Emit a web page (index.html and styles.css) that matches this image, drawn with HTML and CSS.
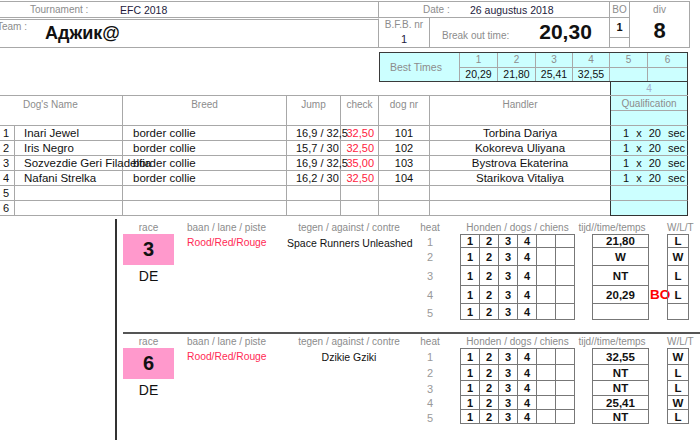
FILE: index.html
```html
<!DOCTYPE html>
<html>
<head>
<meta charset="utf-8">
<link rel="stylesheet" href="styles.css">
</head>
<body>
<div class="sheet">
  <div class="top">
    <div class="c tour"><span class="lbl">Tournament :</span><span class="val">EFC 2018</span></div>
    <div class="c date"><span class="lbl">Date :</span><span class="val">26 augustus 2018</span></div>
    <div class="c bolbl"><span class="lbl">BO</span></div>
    <div class="c divc"><span class="lbl">div</span><span class="big">8</span></div>
    <div class="c team"><span class="lbl">Team :</span><span class="teamname">Аджик@</span></div>
    <div class="c bfb"><span class="lbl">B.F.B. nr</span><span class="num">1</span></div>
    <div class="c bot"><span class="lbl">Break out time:</span><span class="big">20,30</span></div>
    <div class="c boval"><div class="one">1</div></div>
  </div>

  <div class="best">
    <div class="btl">Best Times</div>
    <div class="bh">1</div><div class="bh">2</div><div class="bh">3</div><div class="bh">4</div><div class="bh">5</div><div class="bh e">6</div>
    <div class="bv">20,29</div><div class="bv">21,80</div><div class="bv">25,41</div><div class="bv">32,55</div><div class="bv"></div><div class="bv e"></div>
  </div>
  <div class="q4">4</div>

  <div class="tbl">
    <div class="th name">Dog's Name</div>
    <div class="th">Breed</div>
    <div class="th">Jump</div>
    <div class="th">check</div>
    <div class="th">dog nr</div>
    <div class="th hd">Handler</div>
    <div class="th q"><div class="qh">Qualification</div></div>

    <div class="td n">1</div><div class="td nm">Inari Jewel</div><div class="td br">border collie</div><div class="td jp">16,9 / 32,5</div><div class="td ck">32,50</div><div class="td nr">101</div><div class="td hd">Torbina Dariya</div><div class="td q qv"><span>1</span><span>x</span><span>20</span><span>sec</span></div>
    <div class="td n">2</div><div class="td nm">Iris Negro</div><div class="td br">border collie</div><div class="td jp">15,7 / 30</div><div class="td ck">32,50</div><div class="td nr">102</div><div class="td hd">Kokoreva Uliyana</div><div class="td q qv"><span>1</span><span>x</span><span>20</span><span>sec</span></div>
    <div class="td n">3</div><div class="td nm">Sozvezdie Geri Filadelfia</div><div class="td br">border collie</div><div class="td jp">16,9 / 32,5</div><div class="td ck">35,00</div><div class="td nr">103</div><div class="td hd">Bystrova Ekaterina</div><div class="td q qv"><span>1</span><span>x</span><span>20</span><span>sec</span></div>
    <div class="td n">4</div><div class="td nm">Nafani Strelka</div><div class="td br">border collie</div><div class="td jp">16,2 / 30</div><div class="td ck">32,50</div><div class="td nr">104</div><div class="td hd">Starikova Vitaliya</div><div class="td q qv"><span>1</span><span>x</span><span>20</span><span>sec</span></div>
    <div class="td n">5</div><div class="td nm"></div><div class="td br"></div><div class="td jp"></div><div class="td ck"></div><div class="td nr"></div><div class="td hd"></div><div class="td q"></div>
    <div class="td n">6</div><div class="td nm"></div><div class="td br"></div><div class="td jp"></div><div class="td ck"></div><div class="td nr"></div><div class="td hd"></div><div class="td q qlast"></div>
  </div>

  <div class="lower">
    <div class="blk b1">
      <div class="hl h-race">race</div>
      <div class="hl h-lane">baan / lane / piste</div>
      <div class="hl h-opp">tegen / against / contre</div>
      <div class="hl h-heat">heat</div>
      <div class="hl h-dogs">Honden / dogs / chiens</div>
      <div class="hl h-time">tijd//time/temps</div>
      <div class="hl h-wlt">W/L/T</div>

      <div class="race"><div class="pink">3</div><div class="de">DE</div></div>
      <div class="lane">Rood/Red/Rouge</div>
      <div class="opp">Space Runners Unleashed</div>

      <div class="ht r2">1</div><div class="ht r3">2</div><div class="ht r4">3</div><div class="ht r5">4</div><div class="ht r6">5</div>

      <div class="dg r2"><span>1</span><span>2</span><span>3</span><span>4</span><span></span><span></span></div>
      <div class="dg r3"><span>1</span><span>2</span><span>3</span><span>4</span><span></span><span></span></div>
      <div class="dg r4"><span>1</span><span>2</span><span>3</span><span>4</span><span></span><span></span></div>
      <div class="dg r5"><span>1</span><span>2</span><span>3</span><span>4</span><span></span><span></span></div>
      <div class="dg r6 last"><span>1</span><span>2</span><span>3</span><span>4</span><span></span><span></span></div>

      <div class="tm r2">21,80</div><div class="tm r3">W</div><div class="tm r4">NT</div><div class="tm r5">20,29</div><div class="tm r6 last"></div>
      <div class="bo r5">BO</div>
      <div class="wl r2">L</div><div class="wl r3">W</div><div class="wl r4">L</div><div class="wl r5">L</div><div class="wl r6 last"></div>
    </div>

    <div class="blk b2">
      <div class="hl h-race">race</div>
      <div class="hl h-lane">baan / lane / piste</div>
      <div class="hl h-opp">tegen / against / contre</div>
      <div class="hl h-heat">heat</div>
      <div class="hl h-dogs">Honden / dogs / chiens</div>
      <div class="hl h-time">tijd//time/temps</div>
      <div class="hl h-wlt">W/L/T</div>

      <div class="race"><div class="pink">6</div><div class="de">DE</div></div>
      <div class="lane">Rood/Red/Rouge</div>
      <div class="opp">Dzikie Gziki</div>

      <div class="ht r2">1</div><div class="ht r3">2</div><div class="ht r4">3</div><div class="ht r5">4</div><div class="ht r6">5</div>

      <div class="dg r2"><span>1</span><span>2</span><span>3</span><span>4</span><span></span><span></span></div>
      <div class="dg r3"><span>1</span><span>2</span><span>3</span><span>4</span><span></span><span></span></div>
      <div class="dg r4"><span>1</span><span>2</span><span>3</span><span>4</span><span></span><span></span></div>
      <div class="dg r5"><span>1</span><span>2</span><span>3</span><span>4</span><span></span><span></span></div>
      <div class="dg r6 last"><span>1</span><span>2</span><span>3</span><span>4</span><span></span><span></span></div>

      <div class="tm r2">32,55</div><div class="tm r3">NT</div><div class="tm r4">NT</div><div class="tm r5">25,41</div><div class="tm r6 last">NT</div>
      <div class="wl r2">W</div><div class="wl r3">L</div><div class="wl r4">L</div><div class="wl r5">W</div><div class="wl r6 last">L</div>
    </div>
  </div>
</div>
</body>
</html>
```
FILE: styles.css
```css
* { box-sizing: border-box; margin: 0; padding: 0; }
html, body { background: #fff; }
body {
  margin: 0;
  width: 700px;
  height: 440px;
  overflow: hidden;
  font-family: "Liberation Sans", Arial, sans-serif;
  color: #111;
}
.sheet { width: 700px; height: 440px; padding-top: 1px; overflow: hidden; }
.lbl { color: #8c8c8c; font-size: 10px; line-height: 12px; white-space: nowrap; }

/* ---------- header block ---------- */
.top {
  display: grid;
  grid-template-columns: 379px 51px 180px 20px 60px;
  grid-template-rows: 16px 30px;
  width: 690px;
  border-top: 1px solid #a8a8a8;
}
.c {
  display: flex;
  min-width: 0;
  border-right: 1px solid #a8a8a8;
  border-bottom: 1px solid #a8a8a8;
}
.val { font-size: 10.5px; line-height: 12px; color: #231b3d; white-space: nowrap; }
.tour { align-items: center; padding-left: 30px; }
.tour .lbl { width: 90px; }
.date { grid-column: 2 / 4; align-items: center; padding-left: 44px; }
.date .lbl { width: 47px; }
.bolbl { justify-content: center; align-items: center; }
.divc { grid-column: 5; grid-row: 1 / 3; flex-direction: column; align-items: center; }
.divc .lbl { margin-top: 2px; }
.divc .big { margin-top: 3px; font-size: 22px; }
.big { font-weight: bold; font-size: 21px; line-height: 24px; color: #111; }
.team {
  align-items: flex-start;
  border-top: 1px solid #fff;
  box-shadow: inset 0 1px 0 #a8a8a8;
}
.team .lbl { margin: 2px 0 0 -3px; width: 48px; }
.teamname { font-weight: bold; font-size: 18px; line-height: 22px; margin-top: 3px; white-space: nowrap; }
.bfb { flex-direction: column; align-items: center; }
.bfb .lbl { line-height: 11px; margin-top: 1px; }
.bfb .num { font-size: 11px; line-height: 13px; margin-top: 3px; color: #231b3d; }
.bot { align-items: baseline; padding: 2px 0 0 12px; }
.bot .big { margin-left: 30px; }
.boval { flex-direction: column; }
.boval .one {
  height: 20px;
  border-bottom: 1px solid #a8a8a8;
  text-align: center;
  font-weight: bold;
  font-size: 11px;
  line-height: 18px;
}

/* ---------- best times ---------- */
.best {
  display: grid;
  grid-template-columns: 80px 38px 38px 37px 37px 38px 39px;
  grid-template-rows: 15px 13px;
  width: 309px;
  margin: 4px 0 0 379px;
  border: 1px solid #3a3a3a;
  background: #ccffff;
}
.btl {
  grid-row: 1 / 3;
  display: flex;
  align-items: center;
  padding-left: 10px;
  border-right: 1px solid #a8a8a8;
  color: #8c8c8c;
  font-size: 10.5px;
}
.bh {
  border-right: 1px solid #a8a8a8;
  border-bottom: 1px solid #a8a8a8;
  text-align: center;
  color: #8c8c8c;
  font-size: 10px;
  line-height: 14px;
}
.bv {
  border-right: 1px solid #a8a8a8;
  text-align: center;
  font-size: 10.5px;
  line-height: 13px;
}
.bh.e, .bv.e { border-right: 0; }
.q4 {
  width: 78px;
  height: 13px;
  margin-left: 610px;
  border-left: 1px solid #333;
  border-right: 1px solid #333;
  background: #ccffff;
  text-align: center;
  color: #a4aecb;
  font-size: 10px;
  line-height: 13px;
}

/* ---------- dogs table ---------- */
.tbl {
  display: grid;
  grid-template-columns: 15px 108px 164px 54px 38px 51px 180px 78px;
  grid-template-rows: 30px repeat(6, 15px);
  width: 688px;
  border-top: 1px solid #a8a8a8;
}
.th, .td {
  border-right: 1px solid #a8a8a8;
  border-bottom: 1px solid #a8a8a8;
  white-space: nowrap;
}
.th {
  padding-top: 3px;
  text-align: center;
  color: #8c8c8c;
  font-size: 10px;
  line-height: 12px;
}
.th.name { grid-column: 1 / 3; text-align: left; padding-left: 23px; }
.th.hd, .td.hd { border-right: 0; }
.q {
  background: #ccffff;
  border-left: 1px solid #333;
  border-right: 1px solid #333;
}
.th.q { padding-top: 0; }
.qh { height: 15px; border-bottom: 1px solid #a8a8a8; line-height: 14px; padding-top: 1px; }
.td { font-size: 11.5px; line-height: 14px; }
.n { padding-left: 3px; font-size: 11px; }
.nm { padding-left: 9px; }
.br { padding-left: 10px; }
.jp { padding-left: 9px; font-size: 11px; }
.ck { text-align: right; padding-right: 4px; color: #ff1a40; font-size: 11px; }
.nr { text-align: center; font-size: 11px; }
.hd { text-align: center; }
.qv { display: flex; gap: 7px; padding-left: 12px; font-size: 11px; }
.qlast { border-bottom: 1px solid #333; }

/* ---------- races ---------- */
.lower {
  height: 222px;
  margin: 3px 0 0 115px;
  padding-left: 6px;
  border-left: 2px solid #333;
}
.blk {
  display: grid;
  grid-template-columns: 51px 13px 100px 124px 38px 11px 115px 17px 57px 18px 22px;
  white-space: nowrap;
}
.b1 { grid-template-rows: 15px 13px 18px 20px 18px 17px; padding-bottom: 12px; }
.b2 { grid-template-rows: 14px 16px 16px 15px 14px 15px; border-top: 2px solid #555; }
.hl {
  grid-row: 1;
  align-self: end;
  text-align: center;
  color: #8c8c8c;
  font-size: 10px;
  line-height: 12px;
}
.h-race { grid-column: 1; }
.h-lane { grid-column: 3; text-align: left; }
.h-opp { grid-column: 4; }
.h-heat { grid-column: 5; }
.h-dogs { grid-column: 7; }
.h-time { grid-column: 8 / 10; }
.h-wlt { grid-column: 11; text-align: left; }

.r2 { grid-row: 2; }
.r3 { grid-row: 3; }
.r4 { grid-row: 4; }
.r5 { grid-row: 5; }
.r6 { grid-row: 6; }

.race {
  grid-column: 1;
  grid-row: 2 / -1;
  display: flex;
  flex-direction: column;
  align-items: center;
}
.pink {
  width: 51px;
  height: 31px;
  display: flex;
  align-items: center;
  justify-content: center;
  background: #ff99cc;
  font-weight: bold;
  font-size: 20px;
}
.de { margin-top: 3px; font-size: 14px; line-height: 16px; }
.lane {
  grid-column: 3;
  grid-row: 2 / -1;
  padding-top: 3px;
  color: #ff2a55;
  font-size: 10.3px;
  line-height: 12px;
}
.opp {
  grid-column: 4;
  grid-row: 2 / -1;
  padding-top: 3px;
  text-align: center;
  font-size: 10.5px;
  line-height: 13px;
}
.ht {
  grid-column: 5;
  display: flex;
  align-items: center;
  justify-content: center;
  padding-top: 2px;
  color: #999;
  font-size: 11px;
}
.dg {
  grid-column: 7;
  display: flex;
  border-left: 1px solid #777;
  border-top: 1px solid #777;
}
.dg span {
  width: 19px;
  display: flex;
  align-items: center;
  justify-content: center;
  border-right: 1px solid #777;
  font-weight: bold;
  font-size: 11px;
}
.tm, .wl {
  display: flex;
  align-items: center;
  justify-content: center;
  border: 1px solid #777;
  border-bottom: 0;
  font-weight: bold;
  font-size: 11.5px;
}
.tm { grid-column: 9; }
.wl { grid-column: 11; }
.last { border-bottom: 1px solid #777; }
.bo {
  grid-column: 10;
  display: flex;
  align-items: center;
  padding-left: 1px;
  color: #ff0000;
  font-weight: bold;
  font-size: 13.5px;
}
```
